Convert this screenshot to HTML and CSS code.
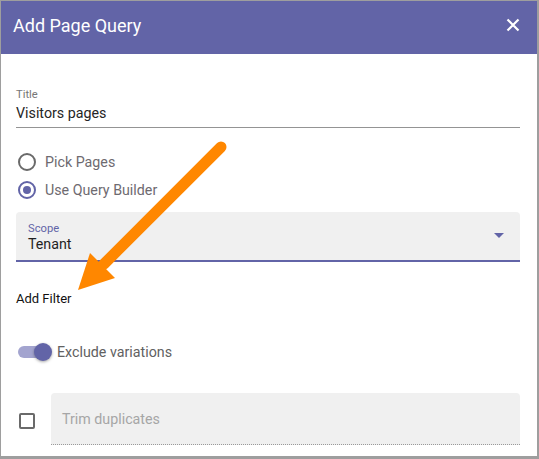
FILE: index.html
```html
<!DOCTYPE html>
<html lang="en">
<head>
<meta charset="utf-8">
<title>Add Page Query</title>
<link rel="stylesheet" href="styles.css">
</head>
<body>
<div class="dialog">
  <header class="dlg-head">
    <h1 class="dlg-title">Add Page Query</h1>
    <button class="close" aria-label="Close">
      <svg width="14" height="14" viewBox="0 0 14 14"><path d="M1.5 1.5L12.5 12.5M12.5 1.5L1.5 12.5" stroke="#fff" stroke-width="2.2" fill="none"/></svg>
    </button>
  </header>
  <div class="dlg-body">
    <div class="text-field">
      <div class="tf-label">Title</div>
      <div class="tf-value">Visitors pages</div>
    </div>
    <div class="radios">
      <div class="radio-row"><span class="radio"></span><span class="radio-text">Pick Pages</span></div>
      <div class="radio-row"><span class="radio checked"><span class="dot"></span></span><span class="radio-text">Use Query Builder</span></div>
    </div>
    <div class="select">
      <div class="sel-text">
        <div class="sel-label">Scope</div>
        <div class="sel-value">Tenant</div>
      </div>
      <svg class="caret" width="10" height="5" viewBox="0 0 10 5"><path d="M0 0H10L5 5Z" fill="#6264a7"/></svg>
    </div>
    <div class="add-filter">Add Filter</div>
    <div class="toggle-row">
      <span class="toggle"><span class="track"></span><span class="thumb"></span></span>
      <span class="toggle-text">Exclude variations</span>
    </div>
    <div class="trim-row">
      <span class="checkbox"></span>
      <div class="trim-field">Trim duplicates</div>
    </div>
  </div>
  <svg class="arrow" width="539" height="459" viewBox="0 0 539 459">
    <line x1="221" y1="147" x2="104" y2="264" stroke="#ff8700" stroke-width="11" stroke-linecap="round"/>
    <polygon points="78,290 90,253 115,278" fill="#ff8700"/>
  </svg>
</div>
</body>
</html>
```
FILE: styles.css
```css
* { box-sizing: border-box; }
html, body { margin: 0; padding: 0; background: #fff; }
body { font-family: Roboto, "Noto Sans", Arial, sans-serif; }

.dialog {
  position: relative;
  width: 539px;
  height: 459px;
  border-style: solid;
  border-color: #9e9e9e;
  border-width: 1px 2px 3px 1px;
  background: #fff;
  overflow: hidden;
}

.dlg-head {
  height: 53px;
  background: #6264a7;
  display: flex;
  align-items: flex-start;
  justify-content: space-between;
  padding: 14px 17px 0 12px;
}
.dlg-title {
  margin: 0;
  font-size: 18px;
  line-height: 21px;
  font-weight: 400;
  color: #fff;
}
.close {
  border: 0;
  background: none;
  padding: 0;
  margin-top: 3px;
  width: 14px;
  height: 14px;
  display: block;
}
.close svg { display: block; }

.dlg-body {
  padding: 34px 17px 11px 15px;
}

.text-field {
  border-bottom: 1px solid #949494;
  padding-bottom: 6px;
}
.tf-label {
  font-size: 11.2px;
  line-height: 13px;
  color: #767676;
}
.tf-value {
  margin-top: 4px;
  font-size: 14.25px;
  line-height: 16px;
  color: #252525;
}

.radios { margin-top: 20px; }
.radio-row {
  height: 28px;
  display: flex;
  align-items: center;
  gap: 9px;
  padding-left: 2px;
}
.radio {
  width: 18px;
  height: 18px;
  border: 2px solid #6a6a6a;
  border-radius: 50%;
  display: flex;
  align-items: center;
  justify-content: center;
}
.radio.checked { border-color: #6264a7; }
.dot {
  width: 8px;
  height: 8px;
  border-radius: 50%;
  background: #6264a7;
}
.radio-text {
  font-size: 14.25px;
  color: #6e6a70;
}

.select {
  margin-top: 8px;
  background: #f0f0f0;
  border-radius: 4px 4px 0 0;
  border-bottom: 2px solid #6264a7;
  padding: 10px 16px 8px 12px;
  display: flex;
  align-items: center;
  justify-content: space-between;
}
.sel-label {
  font-size: 11.2px;
  line-height: 13px;
  color: #6264a7;
}
.sel-value {
  margin-top: 1px;
  font-size: 14.25px;
  line-height: 16px;
  color: #1f1f1f;
}
.caret { display: block; margin-bottom: 3px; }

.add-filter {
  margin-top: 29px;
  font-size: 13px;
  line-height: 15px;
  color: #111;
}

.toggle-row {
  margin-top: 34px;
  height: 24px;
  display: flex;
  align-items: center;
  gap: 5px;
  padding-left: 2px;
}
.toggle {
  position: relative;
  width: 34px;
  height: 18px;
  flex: none;
}
.track {
  position: absolute;
  left: 0;
  top: 3px;
  width: 30px;
  height: 12px;
  border-radius: 6px;
  background: #a3a4cf;
}
.thumb {
  position: absolute;
  left: 16px;
  top: 0;
  width: 18px;
  height: 18px;
  border-radius: 50%;
  background: #6264a7;
  box-shadow: 0 1px 3px rgba(0, 0, 0, 0.35);
}
.toggle-text {
  font-size: 14.25px;
  line-height: 24px;
  color: #616161;
}

.trim-row {
  margin-top: 29px;
  display: flex;
  align-items: flex-start;
}
.checkbox {
  margin: 20px 0 0 3px;
  width: 16px;
  height: 16px;
  border: 2px solid #6a6a6a;
  border-radius: 2px;
  flex: none;
}
.trim-field {
  margin-left: 16px;
  flex: 1;
  background: #f0f0f0;
  border-radius: 4px 4px 0 0;
  border-bottom: 1px dotted #9a9a9a;
  padding: 18px 12px 17px 11px;
  font-size: 14.25px;
  line-height: 16px;
  color: #a6a6a6;
}

.arrow {
  position: absolute;
  left: -1px;
  top: -1px;
  pointer-events: none;
}
```
